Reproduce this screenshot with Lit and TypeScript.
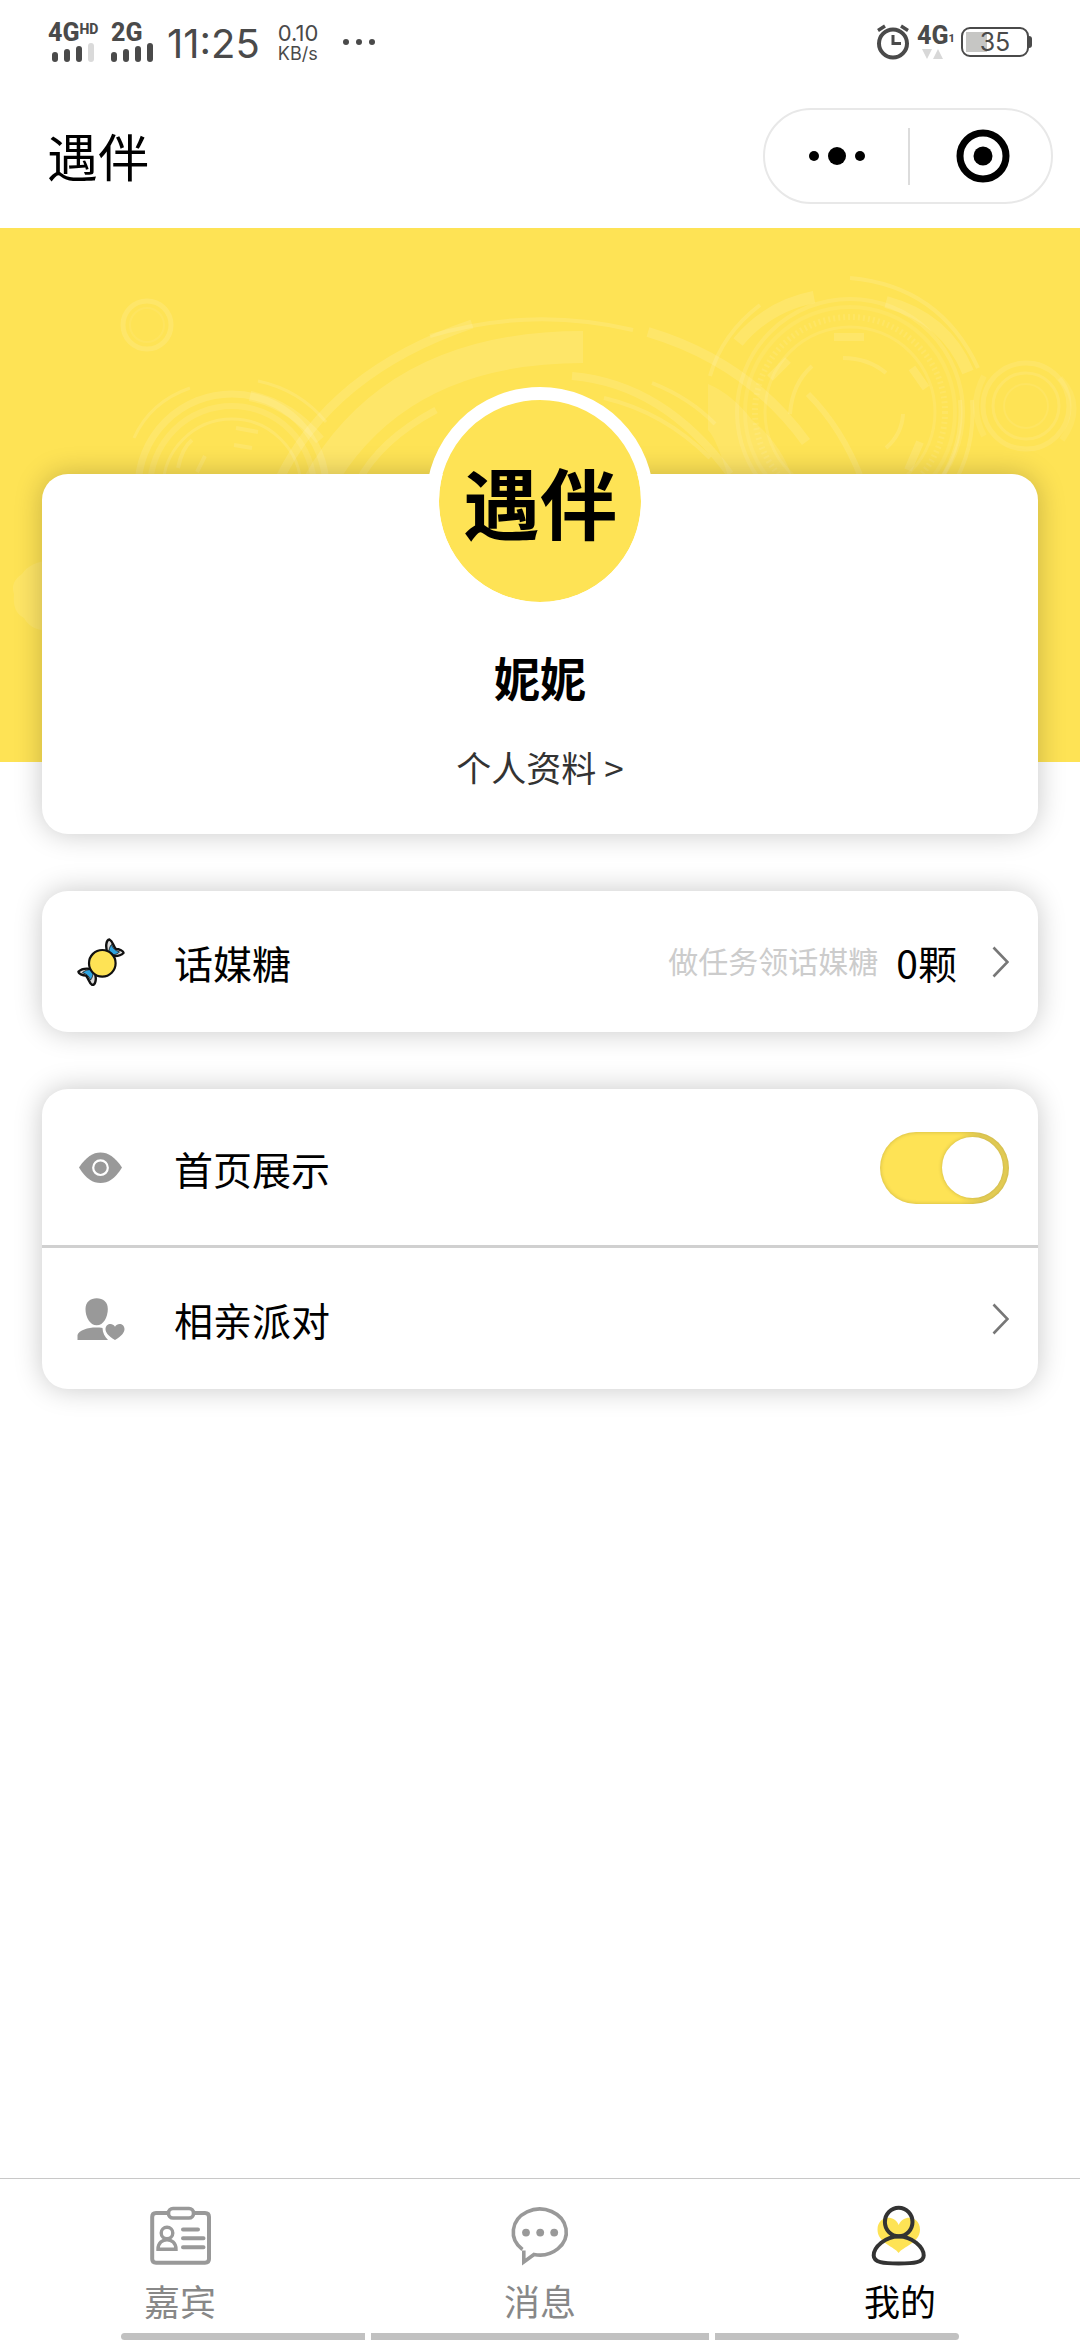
import { LitElement, html, svg, css } from "lit";
import { customElement, property, state } from "lit/decorators.js";
import { classMap } from "lit/directives/class-map.js";

const candyIcon = html`<svg class="icon" width="48" height="48" viewBox="0 0 48 48" aria-hidden="true">
  ${[0, 180].map(
    (turn) => svg`<g transform="rotate(${turn} 24 24.3)" stroke-linejoin="round">
      <path d="M31 17 C28 9 29 2 32.500 1.500 C36 3 36 8 39 11 C42 11 47 13 46.500 15 C43 18.500 37 18.500 31 17Z" fill="#ddd" stroke="#111" stroke-width="2.400"/>
      <path d="M31.500 16.500 C31.500 12 33 8 34.500 6.500 C35.500 10 38 12.500 42.500 14 C39 17 35 17.500 31.500 16.500Z" fill="#2fa4e0" stroke="#111" stroke-width=".8"/>
    </g>`
  )}
  <circle cx="25.300" cy="25.300" r="13.300" fill="#fee355" stroke="#111" stroke-width="2.200"/>
</svg>`;

const eyeIcon = html`<svg class="icon" width="48" height="32" viewBox="0 0 48 32" aria-hidden="true">
  <path d="M2 15.500 C9 5 16 .5 23.500 .5 S38 5 45 15.500 C38 27 31 31 23.500 31 S9 27 2 15.500Z" fill="#999"/>
  <circle cx="23.500" cy="15.700" r="7.300" fill="none" stroke="#fff" stroke-width="2.200"/>
</svg>`;

const partyIcon = html`<svg class="icon" width="48" height="42" viewBox="0 0 48 42" aria-hidden="true">
  <g fill="#999">
    <path d="M19.700 .3 C26 .3 30.800 4 30.800 11 C30.800 19 26.500 27.300 19.700 27.300 S8.500 19 8.500 11 C8.500 4 13.400 .3 19.700 .3Z"/>
    <path d="M.5 42 V37 C2 32 11 29.500 19 29.500 C21 29.500 24 29.600 25.500 30 C25.500 35 28 39 31 42Z"/>
    <path d="M38 42 C31 37.500 28.500 34.500 28.500 31 C28.500 25.500 35.500 24 38 28.700 C40.500 24 47.500 25.500 47.500 31 C47.500 34.500 45 37.500 38 42Z"/>
  </g>
</svg>`;

const chevron = html`<svg class="chevron" width="18" height="32" viewBox="0 0 18 32" aria-hidden="true">
  <path d="M2.500 1.500 L16.500 16 L2.500 30.500" fill="none" stroke="#777" stroke-width="2.600"/>
</svg>`;

const guestIcon = svg`<g fill="none" stroke="#999" stroke-width="4" stroke-linecap="round" stroke-linejoin="round">
  <path d="M20 11 H9 Q5.200 11 5.200 15 V57 Q5.200 60.700 9 60.700 H58 Q62 60.700 62 57 V15 Q62 11 58 11 H47"/>
  <rect x="21.500" y="6.500" width="25" height="9.500" rx="4.500" stroke-width="3.600"/>
  <circle cx="20" cy="31" r="5.800" stroke-width="3.400"/>
  <path d="M11 47.300 C11 34.500 29 34.500 29 47.300Z" stroke-width="3.400" stroke-linejoin="miter"/>
  <path d="M36 27.400 H51 M36 36.300 H56.500 M36 45.300 H56.500"/>
</g>`;

const chatIcon = svg`<path d="M15.500 47.500 A26.500 23 0 1 1 27 52.500 L16.800 60 V48.500" fill="none" stroke="#999" stroke-width="3.600"/>
<g fill="#999"><circle cx="19" cy="30.600" r="3.900"/><circle cx="33.200" cy="30.600" r="3.900"/><circle cx="47.200" cy="30.600" r="3.900"/></g>`;

const mineIcon = svg`<path d="M31.700 51 C28 45 10.500 41 10.500 27.500 C10.500 14 27 11.500 31.700 23 C36.400 11.500 53 14 53 27.500 C53 41 35.400 45 31.700 51Z" fill="#fee355"/>
<g fill="none" stroke="#333" stroke-width="4">
  <ellipse cx="31.700" cy="20" rx="13.800" ry="14.200"/>
  <path d="M31.700 34.500 C45 34.500 56.700 45 56.700 53.500 C56.700 60.500 47 61.500 31.700 61.500 S6.700 60.500 6.700 53.500 C6.700 45 18.400 34.500 31.700 34.500Z"/>
</g>`;

@customElement("status-bar")
class StatusBar extends LitElement {
  static styles = css`
    :host {
      display: flex;
      justify-content: space-between;
      height: 84px;
      padding: 0 48px;
      box-sizing: border-box;
      color: #4a4a4a;
      font-family: Inter, Roboto, sans-serif;
    }
    .side { display: flex; align-items: center; }
    .signal { display: flex; flex-direction: column; width: 63px; }
    .signal + .signal { width: 56px; }
    .net { display: flex; font-size: 25px; line-height: 19px; font-weight: 800; font-family: Roboto, sans-serif; }
    .hd { font-size: 14px; line-height: 12px; }
    .sub { font-size: 11px; line-height: 12px; align-self: flex-end; }
    .time { font-size: 40px; line-height: 48px; padding-top: 4px; }
    .rate { display: flex; flex-direction: column; font-size: 18px; line-height: 19px; margin-left: 18px; }
    .speed { font-size: 22px; line-height: 22px; }
    .more { margin-left: 20px; }
    .alarm { margin-right: 7px; }
    .data { display: flex; flex-direction: column; align-items: flex-start; width: 44px; gap: 4px; }
    .tri { margin-left: 5px; }
    .battery {
      display: grid;
      place-items: center;
      width: 68px;
      height: 30px;
      box-sizing: border-box;
      border: 2px solid #4a4a4a;
      border-radius: 9px;
      font-size: 25px;
      line-height: 26px;
      background: linear-gradient(#c6c6c4, #c6c6c4) 3px 3px / 21px 20px no-repeat;
    }
    .nub { width: 3px; height: 12px; border-radius: 0 3px 3px 0; background: #4a4a4a; }
  `;

  private bars(weak: boolean) {
    return html`<svg width="46" height="20" viewBox="0 0 46 20" aria-hidden="true">
      ${[10, 13, 16, 19].map(
        (h, i) => svg`<rect x=${(weak ? 4 : 0) + i * 12} y=${20 - h} width="6" height=${h} rx="3" fill=${weak && i === 3 ? "#dadada" : "#4a4a4a"} />`
      )}
    </svg>`;
  }

  render() {
    return html`
      <div class="side">
        <div class="signal"><span class="net">4G<span class="hd">HD</span></span>${this.bars(true)}</div>
        <div class="signal"><span class="net">2G</span>${this.bars(false)}</div>
        <span class="time">11:25</span>
        <div class="rate"><span class="speed">0.10</span><span>KB/s</span></div>
        <svg class="more" width="40" height="8" viewBox="0 0 40 8" aria-hidden="true">
          <g fill="#4a4a4a"><circle cx="8" cy="4" r="3"/><circle cx="21" cy="4" r="3"/><circle cx="34" cy="4" r="3"/></g>
        </svg>
      </div>
      <div class="side">
        <svg class="alarm" width="34" height="36" viewBox="0 0 34 36" aria-hidden="true">
          <g fill="none" stroke="#4a4a4a">
            <circle cx="17" cy="19.500" r="14" stroke-width="4"/>
            <path d="M17 11 V19.500 H25" stroke-width="3"/>
            <path d="M2 6.500 L9 2 M25 2 L32 6.500" stroke-width="3.400"/>
          </g>
        </svg>
        <div class="data">
          <span class="net">4G<span class="sub">1</span></span>
          <svg class="tri" width="22" height="10" viewBox="0 0 22 10" aria-hidden="true">
            <path d="M0 0 H10 L5 10Z M11 10 H21 L16 0Z" fill="#d8d8d8"/>
          </svg>
        </div>
        <span class="battery">35</span><span class="nub"></span>
      </div>
    `;
  }
}

@customElement("banner-art")
class BannerArt extends LitElement {
  static styles = css`
    :host { display: block; height: 534px; background: #fee355; overflow: hidden; }
    .art { display: block; width: 100%; height: 100%; }
  `;
  render() {
    return html`<svg class="art" viewBox="0 228 1080 534" preserveAspectRatio="xMidYMin slice" aria-hidden="true">
      <g fill="none" stroke="#fff" stroke-opacity=".12">
        <circle cx="147" cy="325" r="24" stroke-width="5"/>
        <circle cx="147" cy="325" r="17" stroke-width="2" stroke-opacity=".06"/>

        <circle cx="232" cy="488" r="94" stroke-width="7"/>
        <circle cx="232" cy="488" r="82" stroke-width="6" stroke-opacity=".1"/>
        <circle cx="232" cy="488" r="69" stroke-width="3"/>
        <path d="M134 438 Q150 402 190 388 M258 381 Q300 390 326 422" stroke-width="3"/>
        <path d="M250 396 Q290 404 320 440" stroke-width="10"/>
        <path d="M178 468 Q182 448 192 440 M197 472 L205 456 M236 428 L258 432 M234 445 L252 448" stroke-width="4"/>

        <path d="M278 482 Q330 372 472 324" stroke-width="9"/>
        <path d="M430 336 Q530 306 633 330" stroke-width="4"/>
        <path d="M310 500 Q385 347 583 347" stroke-width="32"/>
        <path d="M358 482 Q380 440 436 410" stroke-width="7"/>
        <path d="M648 332 Q748 362 806 442" stroke-width="10"/>
        <path d="M572 376 Q664 384 730 474" stroke-width="8"/>
        <path d="M604 398 Q664 412 710 458 M652 383 Q690 398 715 424" stroke-width="4"/>
        <path d="M808 394 Q842 428 862 480" stroke-width="6"/>

        <circle cx="850" cy="412" r="113" stroke-width="4" stroke-opacity=".1"/>
        <circle cx="850" cy="412" r="105" stroke-width="4" stroke-opacity=".07"/>
        <circle cx="850" cy="412" r="95" stroke-width="6" stroke-dasharray="2 3" stroke-opacity=".09"/>
        <circle cx="850" cy="412" r="85" stroke-width="3" stroke-opacity=".09"/>
        <path d="M850 278 Q940 286 978 368 M710 376 Q722 334 760 305" stroke-width="4"/>
        <path d="M738 342 Q768 306 814 297 M886 302 Q946 318 968 372" stroke-width="12"/>
        <path d="M972 400 Q976 450 950 490 M960 400 Q964 444 940 480" stroke-width="4"/>
        <path d="M834 337 H864 M770 378 L788 360 M912 368 L926 388 M908 470 L920 442" stroke-width="8"/>
        <path d="M790 414 Q792 384 812 366 M843 358 Q868 358 886 373 M903 414 Q902 434 886 448" stroke-width="4"/>

        <circle cx="1026" cy="406" r="43" stroke-width="5" stroke-opacity=".1"/>
        <circle cx="1026" cy="406" r="33" stroke-width="3" stroke-opacity=".1"/>
        <circle cx="1026" cy="406" r="22" stroke-width="2" stroke-opacity=".07"/>
        <path d="M984 376 Q968 406 984 436 M1060 378 Q1086 406 1062 440" stroke-width="6" stroke-opacity=".08"/>
      </g>
      <g fill="#fff" fill-opacity=".1">
        <path d="M708 384 Q732 394 752 420 Q786 448 796 490 H732 Q718 440 708 430Z"/>
        <path d="M50 560 Q30 562 22 574 Q10 582 14 594 Q12 612 24 618 Q32 632 50 630Z"/>
      </g>
    </svg>`;
  }
}

interface Tab { id: string; label: string; icon: unknown; }

@customElement("tab-bar")
class TabBar extends LitElement {
  @property() active = "mine";
  private tabs: Tab[] = [
    { id: "guest", label: "嘉宾", icon: guestIcon },
    { id: "chat", label: "消息", icon: chatIcon },
    { id: "mine", label: "我的", icon: mineIcon },
  ];
  static styles = css`
    :host { display: block; border-top: 1px solid #c8c8c8; background: #fff; }
    .tabs { display: grid; grid-template-columns: repeat(3, 1fr); }
    .tab {
      display: flex;
      flex-direction: column;
      align-items: center;
      gap: 10px;
      padding: 23px 0 11px;
      color: #888;
      font-size: 36px;
      line-height: 44px;
      text-decoration: none;
    }
    .on { color: #000; }
    .handles { display: flex; gap: 6px; margin: 0 121px; }
    .handle { flex: 244 0 0; height: 7px; background: #c1c1c1; }
    .handle:first-child { border-radius: 4px 0 0 4px; }
    .handle:last-child { border-radius: 0 4px 4px 0; }
    .wide { flex-grow: 338; }
  `;
  render() {
    return html`
      <nav class="tabs">
        ${this.tabs.map(
          (t) => html`<a class=${classMap({ tab: true, on: t.id === this.active })} href="#${t.id}">
            <svg width="66" height="66" viewBox="0 0 66 66" aria-hidden="true">${t.icon}</svg>
            <span>${t.label}</span>
          </a>`
        )}
      </nav>
      <div class="handles"><span class="handle"></span><span class="handle wide"></span><span class="handle"></span></div>
    `;
  }
}

@customElement("app-root")
class AppRoot extends LitElement {
  @state() private shown = true;

  static styles = css`
    :host {
      display: flex;
      flex-direction: column;
      min-height: 100vh;
      background: #fff;
      color: #000;
      font-family: "Noto Sans CJK SC", sans-serif;
    }
    .header {
      display: flex;
      align-items: center;
      justify-content: space-between;
      height: 144px;
      padding: 0 27px 0 47px;
      box-sizing: border-box;
    }
    .title { margin: 0; padding-bottom: 2px; font-size: 51px; line-height: 72px; font-weight: 400; }
    .capsule {
      display: grid;
      grid-template-columns: 1fr 1fr;
      align-items: center;
      width: 290px;
      height: 96px;
      box-sizing: border-box;
      border: 2px solid #e8e8e8;
      border-radius: 48px;
    }
    .cap {
      display: grid;
      place-items: center;
      height: 57px;
      padding: 0;
      border: 0;
      background: none;
    }
    .cap + .cap { border-left: 2px solid #dcdcdc; padding-left: 4px; }
    .content { display: flex; flex-direction: column; gap: 57px; margin: -288px 42px 57px; }
    .card { border-radius: 26px; background: #fff; box-shadow: 0 0 28px rgba(0, 0, 0, 0.22); }
    .profile { display: flex; flex-direction: column; align-items: center; padding-bottom: 43px; }
    .avatar {
      display: grid;
      place-items: center;
      width: 202px;
      height: 202px;
      margin-top: -87px;
      border: 13px solid #fff;
      border-radius: 50%;
      background: #fee355 padding-box;
      font-size: 77px;
      line-height: 72px;
      font-weight: 700;
    }
    .name { margin: 31px 0 0; font-size: 46px; line-height: 60px; font-weight: 700; }
    .info { margin-top: 37px; font-size: 35px; line-height: 48px; color: #333; text-decoration: none; }
    .row {
      display: flex;
      align-items: center;
      height: 141px;
      padding: 0 29px 0 35px;
      box-sizing: border-box;
      color: #000;
      font-size: 39px;
      line-height: 56px;
      text-decoration: none;
    }
    .tall { height: 159px; padding-top: 1px; border-bottom: 3px solid #d0d0d0; }
    .label { margin-left: 49px; flex: 1; }
    .hint { padding-bottom: 4px; font-size: 30px; line-height: 44px; color: #ccc; margin-right: 18px; }
    .count { margin-right: 34px; }
    .switch {
      appearance: none;
      display: flex;
      align-items: center;
      width: 129px;
      height: 72px;
      margin: 0;
      padding: 0 6px;
      box-sizing: border-box;
      border-radius: 36px;
      background: #e5e5e5;
      box-shadow: inset 0 0 4px rgba(0, 0, 0, 0.2);
    }
    .switch::before {
      content: "";
      width: 61px;
      height: 61px;
      border-radius: 50%;
      background: #fff;
      box-shadow: 0 0 4px rgba(0, 0, 0, 0.2);
    }
    .switch:checked {
      justify-content: flex-end;
      background: linear-gradient(90deg, #fee355 62%, #ead257 78%);
    }
    .tabbar { margin-top: auto; }
  `;

  render() {
    return html`
      <status-bar></status-bar>
      <header class="header">
        <h1 class="title">遇伴</h1>
        <div class="capsule">
          <button class="cap" type="button" aria-label="更多">
            <svg width="58" height="20" viewBox="0 0 58 20"><circle cx="6" cy="10" r="5"/><circle cx="29" cy="10" r="9"/><circle cx="52" cy="10" r="5"/></svg>
          </button>
          <button class="cap" type="button" aria-label="关闭">
            <svg width="54" height="54" viewBox="0 0 54 54"><circle cx="27" cy="27" r="23" fill="none" stroke="#000" stroke-width="7"/><circle cx="27" cy="27" r="9.500"/></svg>
          </button>
        </div>
      </header>
      <banner-art></banner-art>
      <main class="content">
        <section class="card profile">
          <div class="avatar">遇伴</div>
          <h2 class="name">妮妮</h2>
          <a class="info" href="#profile">个人资料 &gt;</a>
        </section>
        <section class="card">
          <a class="row" href="#candy">
            ${candyIcon}<span class="label">话媒糖</span>
            <span class="hint">做任务领话媒糖</span><span class="count">0颗</span>${chevron}
          </a>
        </section>
        <section class="card">
          <div class="row tall">
            ${eyeIcon}<label class="label" for="shown">首页展示</label>
            <input
              class="switch"
              id="shown"
              type="checkbox"
              role="switch"
              .checked=${this.shown}
              @change=${(e: Event) => (this.shown = (e.target as HTMLInputElement).checked)}
            />
          </div>
          <a class="row" href="#party">${partyIcon}<span class="label">相亲派对</span>${chevron}</a>
        </section>
      </main>
      <tab-bar class="tabbar" active="mine"></tab-bar>
    `;
  }
}
